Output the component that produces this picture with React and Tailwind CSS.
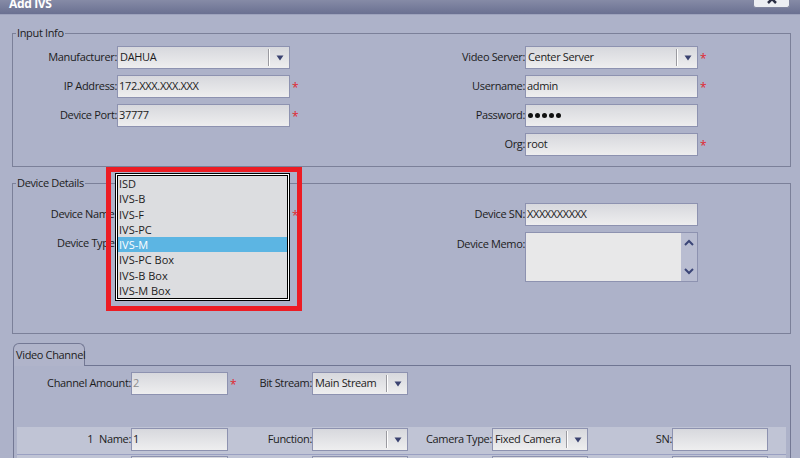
import React from "react";

const FONT = "font-['Open_Sans','Noto_Sans',sans-serif]";

function Arrow() {
  return (
    <svg width="8" height="6" viewBox="0 0 8 6">
      <path d="M0.5 0.5 L7.5 0.5 L4 5.5 Z" fill="#3a4270" />
    </svg>
  );
}

function Box({ w, h = "h-[23px]", children, className = "" }) {
  return (
    <div
      className={`${w} ${h} shrink-0 border border-[#8d92b0] bg-linear-to-b from-[#d7d8dd] to-[#eeeeef] flex items-center pl-[1px] overflow-hidden whitespace-nowrap ${className}`}
    >
      {children}
    </div>
  );
}

function Select({ w, value }) {
  return (
    <div
      className={`${w} h-[23px] shrink-0 border border-[#8d92b0] bg-linear-to-b from-[#d7d8dd] to-[#eeeeef] flex items-stretch`}
    >
      <div className="flex-1 flex items-center pl-[2px] whitespace-nowrap overflow-hidden">{value}</div>
      <div className="w-[2px] my-[2px] border-l border-[#9a9aa0] border-r border-r-white" />
      <div className="w-[19px] flex items-center justify-center">
        <Arrow />
      </div>
    </div>
  );
}

function Star() {
  return <span className="text-[#e1262d] text-[12px] leading-none pt-[2px] pl-[2px]">*</span>;
}

function Label({ w, children }) {
  return <div className={`${w} shrink-0 text-right whitespace-nowrap`}>{children}</div>;
}

function Row({ children }) {
  return <div className="flex items-center h-[23px]">{children}</div>;
}

function Dots() {
  return (
    <div className="flex gap-[2px] pl-[1px]">
      {[0, 1, 2, 3, 4].map((i) => (
        <div key={i} className="w-[5px] h-[5px] rounded-full bg-[#111]" />
      ))}
    </div>
  );
}

function Memo() {
  return (
    <div className="w-[173px] h-[50px] shrink-0 border border-[#8d92b0] bg-[#e8e8e9] flex">
      <div className="flex-1" />
      <div className="w-[16px] bg-[#b9bdd1] flex flex-col items-center justify-between py-[6px]">
        <svg width="10" height="7" viewBox="0 0 10 7">
          <path d="M1 6 L5 2 L9 6" stroke="#3b4577" strokeWidth="2" fill="none" />
        </svg>
        <svg width="10" height="7" viewBox="0 0 10 7">
          <path d="M1 1 L5 5 L9 1" stroke="#3b4577" strokeWidth="2" fill="none" />
        </svg>
      </div>
    </div>
  );
}

const ITEMS = ["ISD", "IVS-B", "IVS-F", "IVS-PC", "IVS-M", "IVS-PC Box", "IVS-B Box", "IVS-M Box"];

export default function App() {
  return (
    <div
      className={`w-[800px] h-[458px] overflow-hidden bg-[#adb2c9] relative text-[11px] tracking-[-0.35px] text-[#1c1c1c] ${FONT}`}
    >
      {/* title bar */}
      <div className="h-[15px] bg-linear-to-b from-[#868ba6] to-[#6a7091] flex border-b border-[#9ea3bd]">
        <span className="ml-[9px] -mt-[3px] font-bold text-white text-[12px] leading-[14px]">Add IVS</span>
        <div className="ml-auto mr-[10px] w-[37px] h-[8px] border border-t-0 border-[#80859f] rounded-b-[3px] bg-[#eceef3] flex justify-center overflow-hidden">
          <svg width="10" height="10" viewBox="0 0 10 10" className="-mt-[6px]">
            <path d="M1 1 L9 9 M9 1 L1 9" stroke="#2b2f45" strokeWidth="2.5" />
          </svg>
        </div>
      </div>

      {/* Input Info */}
      <fieldset className="ml-[12px] mt-[10px] w-[779px] border border-[#7b8099] px-0 pt-[5px] pb-[10px]">
        <legend className="ml-[3px] px-[1px] leading-[16px] text-[11px]">Input Info</legend>
        <div className="flex">
          <div className="w-[300px] flex flex-col gap-[6px]">
            <Row>
              <Label w="w-[104px]">Manufacturer:</Label>
              <Select w="w-[173px]" value="DAHUA" />
            </Row>
            <Row>
              <Label w="w-[104px]">IP Address:</Label>
              <Box w="w-[173px]">172.XXX.XXX.XXX</Box>
              <Star />
            </Row>
            <Row>
              <Label w="w-[104px]">Device Port:</Label>
              <Box w="w-[173px]">37777</Box>
              <Star />
            </Row>
          </div>
          <div className="flex flex-col gap-[6px]">
            <Row>
              <Label w="w-[212px]">Video Server:</Label>
              <Select w="w-[173px]" value="Center Server" />
              <Star />
            </Row>
            <Row>
              <Label w="w-[212px]">Username:</Label>
              <Box w="w-[173px]">admin</Box>
              <Star />
            </Row>
            <Row>
              <Label w="w-[212px]">Password:</Label>
              <Box w="w-[173px]">
                <Dots />
              </Box>
            </Row>
            <Row>
              <Label w="w-[212px]">Org:</Label>
              <Box w="w-[173px]">root</Box>
              <Star />
            </Row>
          </div>
        </div>
      </fieldset>

      {/* Device Details */}
      <fieldset className="ml-[12px] mt-[8px] w-[779px] border border-[#7b8099] px-0 pt-[12px] pb-[51px]">
        <legend className="ml-[3px] px-[1px] leading-[16px] text-[11px]">Device Details</legend>
        <div className="flex">
          <div className="w-[300px] flex flex-col gap-[6px]">
            <Row>
              <Label w="w-[104px]">Device Name:</Label>
              <Box w="w-[173px]" />
              <Star />
            </Row>
            <Row>
              <Label w="w-[104px]">Device Type:</Label>
              <Select w="w-[173px]" value="IVS-M" />
            </Row>
          </div>
          <div className="flex flex-col gap-[6px]">
            <Row>
              <Label w="w-[212px]">Device SN:</Label>
              <Box w="w-[173px]">
                <span className="tracking-[-0.4px] text-[11px]">XXXXXXXXXX</span>
              </Box>
            </Row>
            <div className="flex items-start">
              <Label w="w-[212px]">
                <span className="leading-[23px]">Device Memo:</span>
              </Label>
              <Memo />
            </div>
          </div>
        </div>
      </fieldset>

      {/* Video Channel */}
      <div className="ml-[13px] mt-[9px] w-[778px]">
        <div className="flex h-[23px]">
          <div className="w-[72px] border-l border-t border-r border-[#737894] rounded-t-[6px] pl-[2px] pt-[3px] leading-[16px] whitespace-nowrap bg-[#b0b4ca]">
            Video Channel
          </div>
          <div className="flex-1 border-b border-[#6f7592]" />
        </div>
        <div className="border-l border-r border-[#737894] h-[200px] pt-[6px]">
          <div className="flex items-center h-[23px]">
            <Label w="w-[117px]">Channel Amount:</Label>
            <Box w="w-[97px]">
              <span className="text-[#8d8d8d]">2</span>
            </Box>
            <div className="w-[84px] shrink-0 flex items-center justify-between">
              <Star />
              <span>Bit Stream:</span>
            </div>
            <Select w="w-[96px]" value="Main Stream" />
          </div>

          <div className="ml-[3px] mt-[32px] w-[769px]">
            {[1, 2].map((n) => (
              <div key={n} className="h-[28px] bg-[#c0c4d5] border-b border-[#9aa0c2] flex items-start pt-[1px]">
                <div className="w-[114px] shrink-0 h-[23px] flex items-center justify-end whitespace-nowrap">
                  <span>{n}</span>
                  <span className="ml-[6px]">Name:</span>
                </div>
                <Box w="w-[97px]">{n}</Box>
                <div className="w-[84px] shrink-0 h-[23px] flex items-center justify-end">Function:</div>
                <Select w="w-[96px]" value="" />
                <div className="w-[84px] shrink-0 h-[23px] flex items-center justify-end">Camera Type:</div>
                <Select w="w-[96px]" value="Fixed Camera" />
                <div className="w-[84px] shrink-0 h-[23px] flex items-center justify-end">SN:</div>
                <Box w="w-[96px]" />
              </div>
            ))}
          </div>
        </div>
      </div>

      {/* red annotation box */}
      <div className="absolute left-[106px] top-[167px] w-[196px] h-[144px] border-[5px] border-[#ec1c24]" />

      {/* dropdown list */}
      <div className="absolute left-[115px] top-[173px] w-[175px] h-[128px] border border-black bg-white p-[1px]">
        <div className="w-full h-full border border-black bg-[#dcdde0] tracking-normal">
          {ITEMS.map((it) => (
            <div
              key={it}
              className={`h-[15.25px] flex items-center pl-[1px] leading-none ${
                it === "IVS-M" ? "bg-[#5cb5e3] text-white" : ""
              }`}
            >
              {it}
            </div>
          ))}
        </div>
      </div>
    </div>
  );
}
